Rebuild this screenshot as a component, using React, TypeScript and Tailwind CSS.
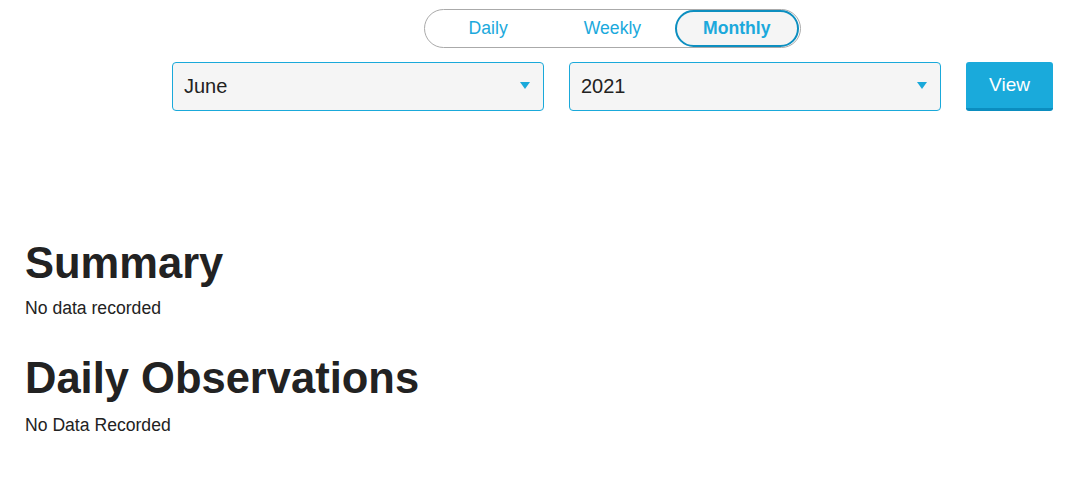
import React from "react";

const font = { fontFamily: '"Liberation Sans", Arial, sans-serif' };

function Caret() {
  return (
    <svg width="10" height="7" viewBox="0 0 10 7" className="shrink-0">
      <path d="M0 0 H10 L5 7 Z" fill="#1aa9da" />
    </svg>
  );
}

function SelectBox({ value }: { value: string }) {
  return (
    <div className="flex h-[49px] w-[372px] items-center justify-between rounded-[4px] border border-[#1aa9da] bg-[#f5f5f5] pb-[2px] pl-[11px] pr-[13px] text-[20px] text-[#222]">
      <span>{value}</span>
      <Caret />
    </div>
  );
}

export default function App() {
  const tabs = ["Daily", "Weekly", "Monthly"];
  const active = "Monthly";

  return (
    <div className="min-h-[496px] w-full bg-white text-[#222]" style={font}>
      {/* period toggle */}
      <div className="flex justify-center pt-[9px] pl-[134px]">
        <div className="flex h-[39px] w-[377px] items-center rounded-full border border-[#aaa] p-px">
          {tabs.map((t) =>
            t === active ? (
              <div
                key={t}
                className="flex h-[37px] w-[125px] items-center justify-center rounded-full border-2 border-[#0d8fc0] bg-[#f5f5f5] text-[17.6px] font-bold text-[#1ba9dc]"
              >
                {t}
              </div>
            ) : (
              <div key={t} className="flex h-[37px] w-[125px] items-center justify-center text-[17.6px] text-[#1ba9dc]">
                {t}
              </div>
            )
          )}
        </div>
      </div>

      {/* month / year pickers */}
      <div className="mt-[14px] flex justify-end gap-[25px] pr-[38px]">
        <SelectBox value="June" />
        <SelectBox value="2021" />
        <button className="h-[49px] w-[87px] rounded-[3px] border-b-[3px] border-[#0b8dbf] bg-[#1aaadb] text-[19px] text-white">
          View
        </button>
      </div>

      <div className="px-[25px] pt-[128px]">
        <h1 className="text-[43.5px] font-bold leading-[48px]">Summary</h1>
        <p className="mt-[9px] text-[17.6px] leading-[24px]">No data recorded</p>
        <h1 className="mt-[34px] text-[43.5px] font-bold leading-[48px]">Daily Observations</h1>
        <p className="mt-[11px] text-[17.6px] leading-[24px]">No Data Recorded</p>
      </div>
    </div>
  );
}
